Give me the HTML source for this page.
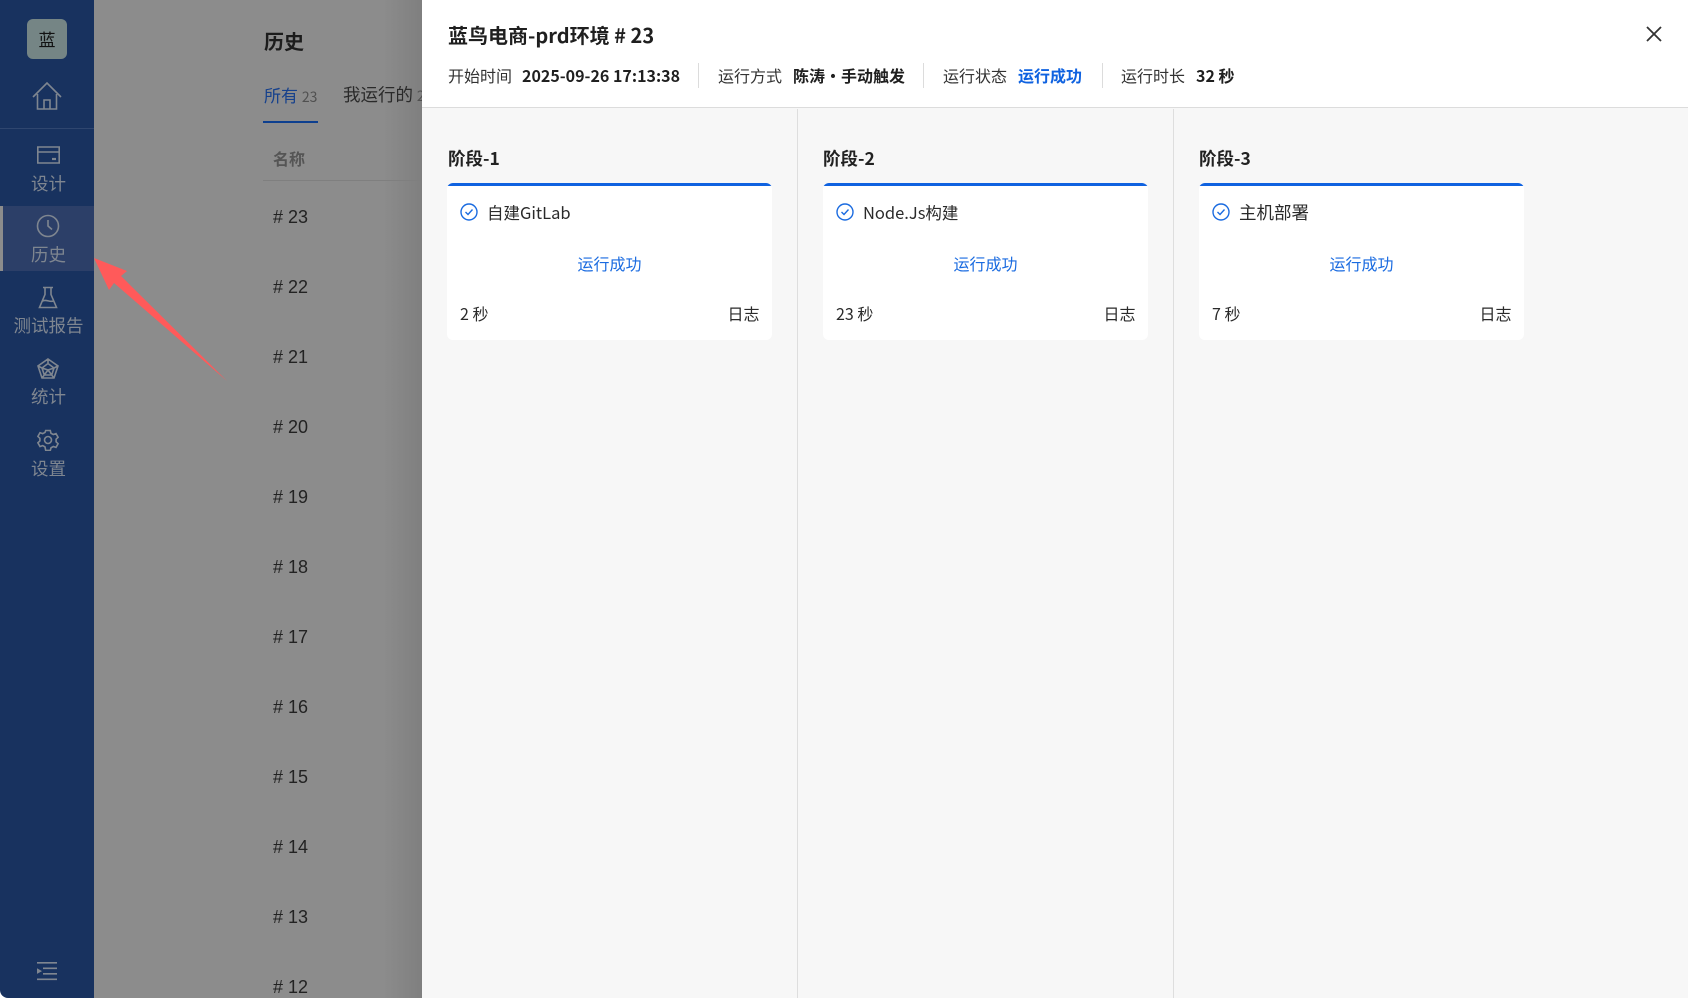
<!DOCTYPE html>
<html lang="zh"><head><meta charset="utf-8"><title>历史</title>
<style>
html,body{margin:0;padding:0;width:1688px;height:998px;overflow:hidden;background:#fff}
body{position:relative;font-family:"Liberation Sans","Noto Sans CJK SC",sans-serif;color:#222}
.a{position:absolute;white-space:nowrap;line-height:24px}
.c{font-family:"Noto Sans CJK SC","Liberation Sans",sans-serif}
.b{font-weight:700}
#bg{position:absolute;left:94px;top:0;width:328px;height:998px;background:linear-gradient(90deg,#8c8c8c 0,#8c8c8c 88%,#7f7f7f 100%);overflow:hidden}
#side{position:absolute;left:0;top:0;width:94px;height:998px;background:#18325f;border-bottom-left-radius:8px}
.s{position:absolute;left:0;width:94px;padding-left:3px;box-sizing:border-box;text-align:center;color:#7f8690;font-size:17.500px;line-height:24px}
svg{position:absolute;fill:none;stroke:#7f8690;stroke-width:1.6}
.r{position:absolute;left:179px;font-size:18px;line-height:24px;color:#222;white-space:nowrap}
#panel{position:absolute;left:422px;top:0;width:1266px;height:998px;background:#f7f7f7}
#hd{position:absolute;left:0;top:0;width:1266px;height:107px;background:#fff;border-bottom:1px solid #dcdcdc;box-sizing:content-box}
.v{position:absolute;top:109px;width:1px;height:889px;background:#dedede}
.sep{position:absolute;top:63px;width:1px;height:25px;background:#dcdcdc}
.card{position:absolute;top:183px;width:325px;height:157px;background:#fff;border-radius:6px;overflow:hidden}
.card .t{position:absolute;left:0;top:0;width:100%;height:3px;background:#0f62e0}
.card svg{stroke:#1a6be0;stroke-width:1.4}
.m{font-size:16px;color:#333}
</style></head><body>

<div id="bg">
 <div class="a b c" style="left:170px;top:29px;font-size:20px;color:#1c1c1c">历史</div>
 <div class="a c" style="left:170px;top:83px;font-size:17px;color:#16418c">所有 <span style="font-size:14px;color:#505050">23</span></div>
 <div style="position:absolute;left:169px;top:121px;width:55px;height:2px;background:#0d3f8f"></div>
 <div class="a c" style="left:249px;top:83px;font-size:17.500px;color:#2a2a2a">我运行的 <span style="font-size:14px;color:#505050">23</span></div>
 <div class="a b c" style="left:179px;top:146px;font-size:16px;color:#555">名称</div>
 <div style="position:absolute;left:169px;top:180px;width:200px;height:1px;background:#7f7f7f"></div>
 <div class="r" style="top:205px"># 23</div>
 <div class="r" style="top:275px"># 22</div>
 <div class="r" style="top:345px"># 21</div>
 <div class="r" style="top:415px"># 20</div>
 <div class="r" style="top:485px"># 19</div>
 <div class="r" style="top:555px"># 18</div>
 <div class="r" style="top:625px"># 17</div>
 <div class="r" style="top:695px"># 16</div>
 <div class="r" style="top:765px"># 15</div>
 <div class="r" style="top:835px"># 14</div>
 <div class="r" style="top:905px"># 13</div>
 <div class="r" style="top:975px"># 12</div>
</div>

<div id="side">
 <div style="position:absolute;left:27px;top:19px;width:40px;height:40px;border-radius:6px;background:#758585;color:#111;font-size:17px;line-height:40px;text-align:center" class="c">蓝</div>
 <svg style="left:31px;top:80px" width="32" height="32" viewBox="0 0 32 32"><path d="M2 17 16 3l14 14M6.500 14v15h19V14M13 29v-9h6v9"/></svg>
 <div style="position:absolute;left:0;top:128px;width:94px;height:1px;background:#2f466f"></div>

 <svg style="left:36px;top:145px" width="25" height="20" viewBox="0 0 25 20"><path d="M1.800 2h21.400v16H1.800zM1.800 7h21.400"/><path d="M16 14h4" stroke-width="2.200"/></svg>
 <div class="s c" style="top:172px">设计</div>

 <div style="position:absolute;left:0;top:206px;width:94px;height:65px;background:#2c3f68"></div>
 <div style="position:absolute;left:0;top:206px;width:3px;height:65px;background:#8c8c8c"></div>
 <svg style="left:36px;top:214px" width="24" height="24" viewBox="0 0 24 24"><circle cx="12" cy="12" r="10.500"/><path d="M12 6v6l4 3.500"/></svg>
 <div class="s c" style="top:243px">历史</div>

 <svg style="left:38px;top:286px" width="20" height="23" viewBox="0 0 20 23"><path d="M5 1.500h10M7 1.500v7L1.500 21.500h17L13 8.500v-7M4.500 15c4-2 7 1.500 11 0"/></svg>
 <div class="s c" style="top:314px">测试报告</div>

 <svg style="left:37px;top:358px" width="22" height="21" viewBox="0 0 22 21"><path d="M11 1 21 8l-4 12H5L1 8zM11 5.500l6 4.500-2.300 7H7.300L5 10zM11 1v4.500M21 8l-4 2M17 20l-2.300-3M5 20l2.300-3M1 8l4 2M11 12 5 10M11 12l6-2M11 12l-3.700 5M11 12l3.700 5"/></svg>
 <div class="s c" style="top:385px">统计</div>

 <svg style="left:37px;top:429px" width="22" height="22" viewBox="0 0 22 22"><circle cx="11" cy="11" r="3.500"/><path d="M8.700 1.500h4.600l.7 2.800 2.300 1.200 2.700-.9 2.100 3.700-2 1.900v2.600l2 1.900-2.100 3.700-2.700-.9-2.300 1.300-.7 2.600H8.700L8 17.900l-2.300-1.300-2.700.9L.9 13.800l2-1.900V9.300l-2-1.900L3 3.700l2.700.9L8 3.400z"/></svg>
 <div class="s c" style="top:457px">设置</div>

 <svg style="left:37px;top:961px;stroke:none;fill:#7f8690" width="21" height="20" viewBox="0 0 21 20"><path d="M0 1h20v1.600H0zM6 6.500h14v1.600H6zM6 12h14v1.600H6zM0 17.500h20v1.600H0zM0 7.300l5 2.800-5 2.800z"/></svg>
</div>

<svg style="left:0;top:0;stroke:none;fill:#ff5a5a" width="240" height="400"><path d="M94 258l33 13-6 5 106 105-113-98-5 7z"/></svg>

<div id="panel">
 <div id="hd"></div>
 <div class="a b c" style="left:26px;top:23px;font-size:20px;color:#1f1f1f">蓝鸟电商-prd环境 # 23</div>

 <div class="a m c" style="left:26px;top:63px">开始时间</div>
 <div class="a b c" style="left:100px;top:63px;font-size:16px;color:#1f1f1f">2025-09-26 17:13:38</div>
 <div class="sep" style="left:276px"></div>
 <div class="a m c" style="left:296px;top:63px">运行方式</div>
 <div class="a b c" style="left:371px;top:63px;font-size:16px;color:#1f1f1f">陈涛·手动触发</div>
 <div class="sep" style="left:501px"></div>
 <div class="a m c" style="left:521px;top:63px">运行状态</div>
 <div class="a b c" style="left:596px;top:63px;font-size:16px;color:#0f62e0">运行成功</div>
 <div class="sep" style="left:680px"></div>
 <div class="a m c" style="left:699px;top:63px">运行时长</div>
 <div class="a b c" style="left:774px;top:63px;font-size:16px;color:#1f1f1f">32 秒</div>

 <svg style="left:1223px;top:25px;stroke:#333;stroke-width:1.800" width="18" height="18" viewBox="0 0 18 18"><path d="M2 2l14 14M16 2 2 16"/></svg>

 <div class="v" style="left:375px"></div>
 <div class="v" style="left:751px"></div>

 <div class="a b c" style="left:26px;top:147px;font-size:17.500px;color:#222">阶段-1</div>
 <div class="a b c" style="left:401px;top:147px;font-size:17.500px;color:#222">阶段-2</div>
 <div class="a b c" style="left:777px;top:147px;font-size:17.500px;color:#222">阶段-3</div>

 <div class="card" style="left:25px"><div class="t"></div>
  <svg style="left:13px;top:20px" width="18" height="18" viewBox="0 0 18 18"><circle cx="9" cy="9" r="8"/><path d="M5.500 9l2.500 2.500 4.500-5"/></svg>
  <div class="a c" style="left:40px;top:17px;font-size:16.500px;color:#2a2a2a">自建GitLab</div>
  <div class="a c" style="left:0;width:100%;text-align:center;top:68px;font-size:16px;color:#1a6be0">运行成功</div>
  <div class="a c" style="left:13px;top:118px;font-size:16px;color:#2a2a2a">2 秒</div>
  <div class="a c" style="right:12.500px;top:118px;font-size:16px;color:#2a2a2a">日志</div>
 </div>
 <div class="card" style="left:401px"><div class="t"></div>
  <svg style="left:13px;top:20px" width="18" height="18" viewBox="0 0 18 18"><circle cx="9" cy="9" r="8"/><path d="M5.500 9l2.500 2.500 4.500-5"/></svg>
  <div class="a c" style="left:40px;top:17px;font-size:16.500px;color:#2a2a2a">Node.Js构建</div>
  <div class="a c" style="left:0;width:100%;text-align:center;top:68px;font-size:16px;color:#1a6be0">运行成功</div>
  <div class="a c" style="left:13px;top:118px;font-size:16px;color:#2a2a2a">23 秒</div>
  <div class="a c" style="right:12.500px;top:118px;font-size:16px;color:#2a2a2a">日志</div>
 </div>
 <div class="card" style="left:777px"><div class="t"></div>
  <svg style="left:13px;top:20px" width="18" height="18" viewBox="0 0 18 18"><circle cx="9" cy="9" r="8"/><path d="M5.500 9l2.500 2.500 4.500-5"/></svg>
  <div class="a c" style="left:40px;top:18px;font-size:17.500px;color:#2a2a2a">主机部署</div>
  <div class="a c" style="left:0;width:100%;text-align:center;top:68px;font-size:16px;color:#1a6be0">运行成功</div>
  <div class="a c" style="left:13px;top:118px;font-size:16px;color:#2a2a2a">7 秒</div>
  <div class="a c" style="right:12.500px;top:118px;font-size:16px;color:#2a2a2a">日志</div>
 </div>
</div>
</body></html>
